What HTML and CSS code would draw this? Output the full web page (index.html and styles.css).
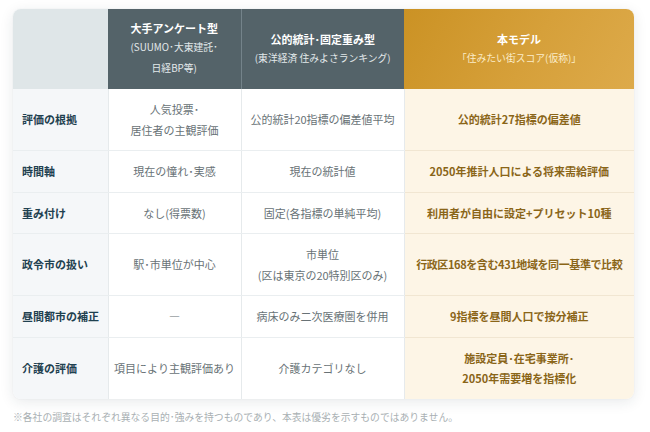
FILE: index.html
```html
<!DOCTYPE html>
<html lang="ja">
<head>
<meta charset="utf-8">
<link rel="stylesheet" href="styles.css">
</head>
<body>
<div class="page">
  <div class="card">
    <table class="cmp">
      <colgroup>
        <col class="c1"><col class="c2"><col class="c3"><col class="c4">
      </colgroup>
      <thead>
        <tr>
          <th class="h-blank"></th>
          <th class="h-dark"><div class="ttl">大手アンケート型</div><div class="sub">(SUUMO･大東建託･<br>日経BP等)</div></th>
          <th class="h-dark"><div class="ttl">公的統計･固定重み型</div><div class="sub">(東洋経済 住みよさランキング)</div></th>
          <th class="h-gold"><div class="ttl">本モデル</div><div class="sub">「住みたい街スコア(仮称)」</div></th>
        </tr>
      </thead>
      <tbody>
        <tr>
          <td class="lbl">評価の根拠</td>
          <td>人気投票･<br>居住者の主観評価</td>
          <td>公的統計20指標の偏差値平均</td>
          <td class="ours">公的統計27指標の偏差値</td>
        </tr>
        <tr>
          <td class="lbl">時間軸</td>
          <td>現在の憧れ･実感</td>
          <td>現在の統計値</td>
          <td class="ours">2050年推計人口による将来需給評価</td>
        </tr>
        <tr>
          <td class="lbl">重み付け</td>
          <td>なし(得票数)</td>
          <td>固定(各指標の単純平均)</td>
          <td class="ours">利用者が自由に設定+プリセット10種</td>
        </tr>
        <tr>
          <td class="lbl">政令市の扱い</td>
          <td>駅･市単位が中心</td>
          <td>市単位<br>(区は東京の20特別区のみ)</td>
          <td class="ours tight">行政区168を含む431地域を同一基準で比較</td>
        </tr>
        <tr>
          <td class="lbl">昼間都市の補正</td>
          <td>―</td>
          <td>病床のみ二次医療圏を併用</td>
          <td class="ours">9指標を昼間人口で按分補正</td>
        </tr>
        <tr>
          <td class="lbl">介護の評価</td>
          <td>項目により主観評価あり</td>
          <td>介護カテゴリなし</td>
          <td class="ours">施設定員･在宅事業所･<br>2050年需要増を指標化</td>
        </tr>
      </tbody>
    </table>
  </div>
  <p class="note">※各社の調査はそれぞれ異なる目的･強みを持つものであり、本表は優劣を示すものではありません。</p>
</div>
</body>
</html>
```

FILE: styles.css
```css
html, body {
  margin: 0;
  padding: 0;
  background: #ffffff;
}
body {
  font-family: "Noto Sans CJK JP", "Noto Sans", sans-serif;
  color: #5f6a6f;
}
.page {
  padding: 9px 16px 0 13px;
}
.card {
  width: 621px;
  border-radius: 8px;
  overflow: hidden;
  box-shadow: 0 3px 14px rgba(30, 50, 60, 0.10), 0 0 2px rgba(30, 50, 60, 0.06);
  background: #fff;
}
.cmp {
  width: 621px;
  table-layout: fixed;
  border-collapse: collapse;
  border-spacing: 0;
}
.c1 { width: 95px; }
.c2 { width: 133px; }
.c3 { width: 163px; }
.c4 { width: 230px; }

.cmp th {
  height: 80px;
  padding: 10px 3px;
  box-sizing: border-box;
  text-align: center;
  vertical-align: middle;
  font-weight: 700;
}
.h-blank {
  background: #dfe6e8;
}
.h-dark {
  background: #546369;
  color: #ffffff;
}
.h-dark + .h-dark {
  border-left: 1px solid #74838a;
}
.h-gold {
  background: linear-gradient(120deg, #cb9224 0%, #d6a03a 55%, #ddaa4a 100%);
  color: #ffffff;
}
.ttl {
  font-size: 11px;
  line-height: 18px;
  font-weight: 700;
}
.sub {
  font-size: 9.8px;
  line-height: 21px;
  font-weight: 400;
  color: #e3e9eb;
  white-space: nowrap;
}
.h-gold .sub {
  color: #fbecc8;
}

.cmp td {
  font-size: 11px;
  line-height: 20.5px;
  padding: 10px 3px;
  text-align: center;
  vertical-align: middle;
  white-space: nowrap;
  border-bottom: 1px solid #eaeef0;
  border-left: 1px solid #e6eaec;
  background: #ffffff;
  color: #687276;
}
.cmp tbody tr:last-child td {
  border-bottom: none;
}
.cmp td.lbl {
  text-align: left;
  padding-left: 9px;
  border-left: none;
  background: #f5f7f9;
  color: #1f4150;
  font-weight: 700;
}
.cmp td.ours {
  background: #fdf5e6;
  color: #8a6518;
  font-weight: 700;
  border-bottom-color: #f1e6d2;
}
.cmp td.tight {
  letter-spacing: -0.4px;
}
.note {
  margin: 10px 0 0 0;
  font-size: 9.8px;
  line-height: 16px;
  color: #a9b0b3;
}
```
